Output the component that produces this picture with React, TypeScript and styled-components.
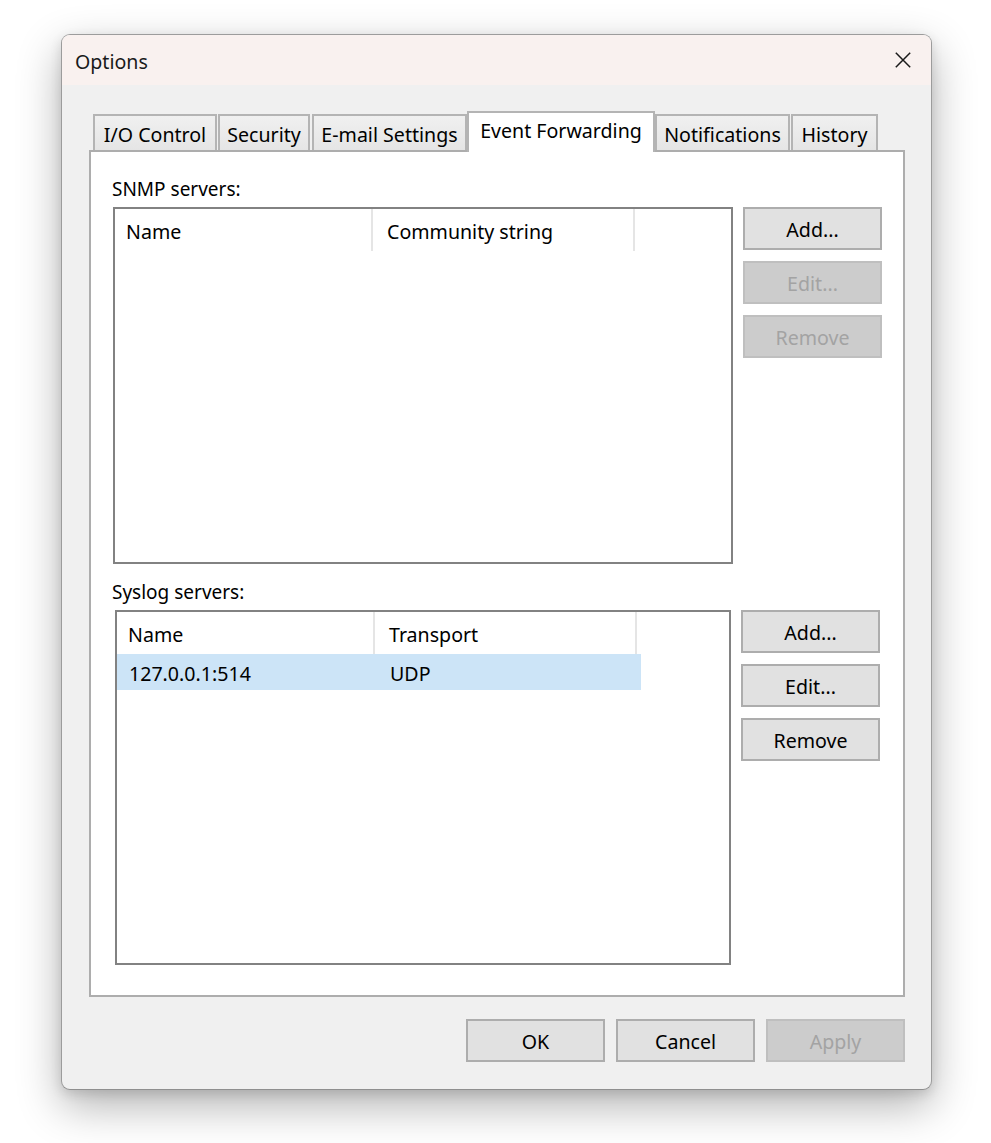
import { useState } from "react";
import styled, { createGlobalStyle } from "styled-components";

const GlobalStyle = createGlobalStyle`
  html, body {
    margin: 0;
    padding: 0;
    background: #ffffff;
  }
  body {
    font-family: "Noto Sans", "Open Sans", sans-serif;
    color: #000;
  }
`;

type Column = { title: string; width: number };

type ServerRow = { cells: string[]; selected?: boolean };

type ServerGroupProps = {
  label: string;
  columns: Column[];
  rows: ServerRow[];
  listWidth: number;
  listHeight: number;
  inset: number;
  buttons: { label: string; disabled?: boolean }[];
};

// widths and the space after each tab, as measured
const TABS = [
  { label: "I/O Control", width: 124, gap: 1 },
  { label: "Security", width: 92, gap: 2 },
  { label: "E-mail Settings", width: 155, gap: 0 },
  { label: "Event Forwarding", width: 188, gap: 0 },
  { label: "Notifications", width: 135, gap: 1 },
  { label: "History", width: 87, gap: 0 },
];

function ServerGroup({
  label,
  columns,
  rows,
  listWidth,
  listHeight,
  inset,
  buttons,
}: ServerGroupProps) {
  return (
    <Group>
      <GroupLabel>{label}</GroupLabel>
      <GroupBody inset={inset}>
        <ListBox w={listWidth} h={listHeight}>
          <HeaderRow>
            {columns.map((col) => (
              <HeaderCell key={col.title} w={col.width}>
                {col.title}
              </HeaderCell>
            ))}
          </HeaderRow>
          {rows.map((row) => (
            <DataRow key={row.cells.join()} selected={row.selected}>
              {row.cells.map((cell, i) => (
                <DataCell key={cell} w={columns[i].width}>
                  {cell}
                </DataCell>
              ))}
            </DataRow>
          ))}
        </ListBox>
        <ButtonColumn>
          {buttons.map((b) => (
            <DialogButton key={b.label} disabled={b.disabled}>
              {b.label}
            </DialogButton>
          ))}
        </ButtonColumn>
      </GroupBody>
    </Group>
  );
}

export default function App() {
  const [active, setActive] = useState<string>("Event Forwarding");

  return (
    <>
      <GlobalStyle />
      <Page>
        <Window>
          <TitleBar>
            <Title>Options</Title>
            <CloseButton aria-label="Close">
              <svg width="16" height="16" viewBox="0 0 16 16">
                <path
                  d="M0.8 0.8 L15.2 15.2 M15.2 0.8 L0.8 15.2"
                  stroke="#1a1a1a"
                  strokeWidth="1.5"
                  fill="none"
                />
              </svg>
            </CloseButton>
          </TitleBar>
          <Content>
            <TabStrip>
              {TABS.map((tab) => (
                <Tab
                  key={tab.label}
                  w={tab.width}
                  gap={tab.gap}
                  active={tab.label === active}
                  onClick={() => setActive(tab.label)}
                >
                  {tab.label}
                </Tab>
              ))}
            </TabStrip>
            <TabPanel>
              <ServerGroup
                label="SNMP servers:"
                columns={[
                  { title: "Name", width: 258 },
                  { title: "Community string", width: 262 },
                ]}
                rows={[]}
                listWidth={620}
                listHeight={357}
                inset={1}
                buttons={[
                  { label: "Add..." },
                  { label: "Edit...", disabled: true },
                  { label: "Remove", disabled: true },
                ]}
              />
              <ServerGroup
                label="Syslog servers:"
                columns={[
                  { title: "Name", width: 258 },
                  { title: "Transport", width: 262 },
                ]}
                rows={[{ cells: ["127.0.0.1:514", "UDP"], selected: true }]}
                listWidth={616}
                listHeight={355}
                inset={3}
                buttons={[
                  { label: "Add..." },
                  { label: "Edit..." },
                  { label: "Remove" },
                ]}
              />
            </TabPanel>
            <Footer>
              <DialogButton>OK</DialogButton>
              <DialogButton>Cancel</DialogButton>
              <DialogButton disabled>Apply</DialogButton>
            </Footer>
          </Content>
        </Window>
      </Page>
    </>
  );
}

const Page = styled.div`
  min-height: 1143px;
  padding: 34px 0 0 61px;
  box-sizing: border-box;
  background: #ffffff;
`;

const Window = styled.div`
  width: 871px;
  height: 1056px;
  box-sizing: border-box;
  border: 1px solid #9c9c9c;
  border-bottom-color: #8f8f8f;
  border-radius: 9px;
  background: #f0f0f0;
  overflow: hidden;
  box-shadow: 0 16px 44px rgba(0, 0, 0, 0.3), 0 4px 12px rgba(0, 0, 0, 0.12);
  display: flex;
  flex-direction: column;
`;

const TitleBar = styled.div`
  height: 50px;
  flex-shrink: 0;
  background: #f9f1ef;
  display: flex;
  align-items: center;
  justify-content: space-between;
  padding: 0 20px 0 13px;
`;

const Title = styled.span`
  font-size: 19.6px;
  color: #1a1a1a;
  padding-top: 2px;
`;

const CloseButton = styled.div`
  width: 16px;
  height: 16px;
  display: flex;
`;

const Content = styled.div`
  flex: 1;
  padding: 26px 26px 0 27px;
  display: flex;
  flex-direction: column;
`;

const TabStrip = styled.div`
  display: flex;
  align-items: flex-end;
  height: 41px;
  padding-left: 4px;
  margin-bottom: -2px;
  position: relative;
  z-index: 1;
`;

type TabProps = { w: number; gap: number; active?: boolean };

const Tab = styled.div<TabProps>`
  box-sizing: border-box;
  width: ${(p) => p.w}px;
  height: ${(p) => (p.active ? 41 : 36)}px;
  margin-right: ${(p) => p.gap}px;
  margin-bottom: ${(p) => (p.active ? 0 : 2)}px;
  padding: ${(p) => (p.active ? "0 0 4px" : "2px 0 0")};
  border: 2px solid #b4b4b4;
  border-bottom: none;
  background: ${(p) =>
    p.active ? "#ffffff" : "linear-gradient(#f0f0f0, #e5e5e5)"};
  display: flex;
  align-items: center;
  justify-content: center;
  font-size: 19.6px;
  white-space: nowrap;
  cursor: default;
  position: relative;
  z-index: ${(p) => (p.active ? 2 : 1)};
`;

const TabPanel = styled.div`
  box-sizing: border-box;
  width: 816px;
  height: 847px;
  border: 2px solid #adadad;
  background: #ffffff;
  padding: 22px 0 0 21px;
  display: flex;
  flex-direction: column;
  gap: 13px;
`;

const Group = styled.div`
  display: flex;
  flex-direction: column;
`;

const GroupLabel = styled.div`
  font-size: 19px;
  line-height: 28px;
  height: 28px;
  padding-top: 1px;
  margin-bottom: 5px;
  box-sizing: border-box;
`;

const GroupBody = styled.div<{ inset: number }>`
  display: flex;
  gap: 10px;
  padding-left: ${(p) => p.inset}px;
`;

const ListBox = styled.div<{ w: number; h: number }>`
  box-sizing: border-box;
  width: ${(p) => p.w}px;
  height: ${(p) => p.h}px;
  border: 2px solid #828282;
  background: #ffffff;
  display: flex;
  flex-direction: column;
`;

const HeaderRow = styled.div`
  display: flex;
  height: 42px;
`;

const HeaderCell = styled.div<{ w: number }>`
  box-sizing: border-box;
  width: ${(p) => p.w}px;
  padding: 3px 0 0 11px;
  border-right: 2px solid #e5e5e5;
  display: flex;
  align-items: center;
  font-size: 19.6px;
  white-space: nowrap;
  & + & {
    padding-left: 14px;
  }
`;

const DataRow = styled.div<{ selected?: boolean }>`
  display: flex;
  width: 524px;
  height: 36px;
  background: ${(p) => (p.selected ? "#cce4f7" : "transparent")};
`;

const DataCell = styled.div<{ w: number }>`
  box-sizing: border-box;
  width: ${(p) => p.w}px;
  padding: 3px 0 0 12px;
  display: flex;
  align-items: center;
  font-size: 19.6px;
  & + & {
    padding-left: 15px;
  }
`;

const ButtonColumn = styled.div`
  display: flex;
  flex-direction: column;
  gap: 11px;
`;

const DialogButton = styled.div<{ disabled?: boolean }>`
  box-sizing: border-box;
  width: 139px;
  height: 43px;
  padding-top: 2px;
  border: 2px solid ${(p) => (p.disabled ? "#bfbfbf" : "#adadad")};
  background: ${(p) => (p.disabled ? "#cccccc" : "#e1e1e1")};
  color: ${(p) => (p.disabled ? "#a3a3a3" : "#000000")};
  display: flex;
  align-items: center;
  justify-content: center;
  font-size: 19.6px;
  cursor: default;
`;

const Footer = styled.div`
  display: flex;
  justify-content: flex-end;
  gap: 11px;
  width: 816px;
  margin-top: 22px;
`;
